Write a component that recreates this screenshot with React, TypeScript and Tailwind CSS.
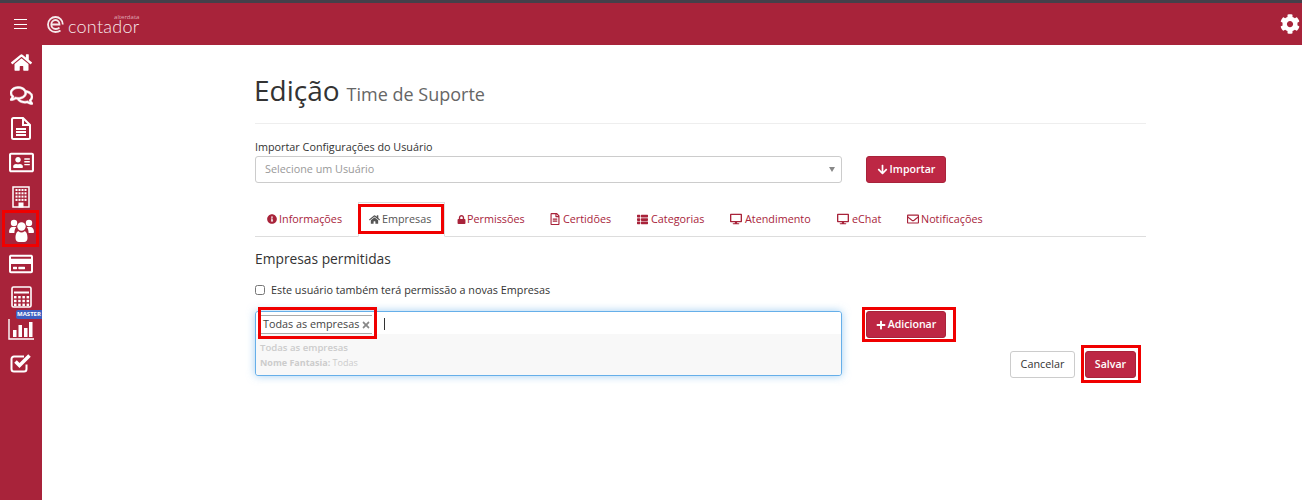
import { FaHome, FaRegComments, FaRegFileAlt, FaRegAddressCard, FaRegCreditCard, FaCog, FaInfoCircle, FaLock, FaThList, FaDesktop, FaRegEnvelope, FaArrowDown, FaPlus, FaTimes } from "react-icons/fa";

const tabs = [
	{ label: "Informações", icon: <FaInfoCircle size={10} />, gap: "gap-[2px]", width: "w-[103px] pl-[12px]" },
	{ label: "Empresas", icon: <FaHome size={11} />, gap: "gap-[2px]", width: "w-[87px] pl-[10px]", active: true },
	{ label: "Permissões", icon: <FaLock size={9} />, gap: "gap-[1px]", width: "w-[93px] pl-[12px]" },
	{ label: "Certidões", icon: <FaRegFileAlt size={12} />, gap: "gap-[2px]", width: "w-[87px] pl-[11px]" },
	{ label: "Categorias", icon: <FaThList size={11} />, gap: "gap-[3px]", width: "w-[93px] pl-[12px]" },
	{ label: "Atendimento", icon: <FaDesktop size={12} />, gap: "gap-[3px]", width: "w-[107px] pl-[12px]" },
	{ label: "eChat", icon: <FaDesktop size={12} />, gap: "gap-[3px]", width: "w-[70px] pl-[12px]" },
	{ label: "Notificações", icon: <FaRegEnvelope size={12} />, gap: "gap-[2px]", width: "w-[100px] pl-[12px]" },
];

function Marker(props: { className: string }) {
	return <div className={`absolute border-[3px] border-[#f00000] pointer-events-none ${props.className}`} />;
}

function FileIcon() {
	return (
		<svg width="20" height="23" viewBox="0 0 20 23" fill="none" stroke="white" strokeWidth="2">
			<path d="M1 2.500A1.500 1.500 0 0 1 2.500 1H12l7 7v12.500a1.500 1.500 0 0 1-1.500 1.500h-15A1.500 1.500 0 0 1 1 20.500z" />
			<path d="M12 1v7h7M5 12h10M5 15h10M5 18h10" />
		</svg>
	);
}

function BuildingIcon() {
	const cells = [];
	for (let y = 0; y < 4; y++) {
		for (let x = 0; x < 4; x++) {
			cells.push(<rect key={`${x}-${y}`} x={3.5 + x * 3} y={3 + y * 3.3} width="2" height="2" fill="white" />);
		}
	}
	return (
		<svg width="18" height="22" viewBox="0 0 18 22" fill="none">
			<rect x="1" y="1" width="16" height="20" stroke="white" strokeWidth="1.500" />
			{cells}
			<rect x="6.500" y="16.500" width="5" height="5" fill="white" />
		</svg>
	);
}

function UsersIcon() {
	return (
		<svg width="25" height="23" viewBox="0 0 25 23" fill="white">
			<circle cx="5" cy="4" r="3.200" />
			<circle cx="20" cy="4" r="3.200" />
			<path d="M0 13c0-3 1.500-5 3.500-5h3.800C6 9.500 5.500 11 5.400 14H1.500C.5 14 0 13.700 0 13zM25 13c0-3-1.500-5-3.500-5h-3.800c1.300 1.500 1.800 3 1.900 6h3.900c1 0 1.500-.3 1.500-1z" />
			<circle cx="12.500" cy="7.500" r="4.200" />
			<path d="M6.500 19c0-4.500 1.500-6.800 3-6.800.9.8 1.900 1.200 3 1.200s2.100-.4 3-1.200c1.500 0 3 2.300 3 6.800 0 2.500-1.500 4-3.500 4h-5c-2 0-3.500-1.500-3.500-4z" />
		</svg>
	);
}

function CalculatorIcon() {
	const keys = [];
	for (let y = 0; y < 3; y++) {
		for (let x = 0; x < 4; x++) {
			keys.push(<rect key={`${x}-${y}`} x={3 + x * 4.2} y={10 + y * 3.8} width="2.500" height="2.400" fill="white" />);
		}
	}
	return (
		<svg width="21" height="22" viewBox="0 0 21 22" fill="none">
			<rect x="1" y="1" width="19" height="20" rx="1.500" stroke="white" strokeWidth="1.600" />
			<path d="M3 6.500h15" stroke="white" strokeWidth="2" />
			{keys}
		</svg>
	);
}

function ChartIcon() {
	return (
		<svg width="26" height="21" viewBox="0 0 26 21" fill="white">
			<path d="M1 0v20h25" fill="none" stroke="white" strokeWidth="1.400" />
			<rect x="5" y="11" width="3.500" height="7" />
			<rect x="10.500" y="6" width="3.500" height="12" />
			<rect x="16" y="9" width="3.500" height="9" />
			<rect x="21" y="3" width="3.500" height="15" />
		</svg>
	);
}

function CheckIcon() {
	return (
		<svg width="22" height="20" viewBox="0 0 22 20" fill="none">
			<path d="M16.500 11.500v4.500a2.500 2.500 0 0 1-2.500 2.500H4A2.500 2.500 0 0 1 1.500 16V6A2.500 2.500 0 0 1 4 3.500h10" stroke="white" strokeWidth="2" />
			<path d="M5.500 8.500l4 4 10-10" stroke="white" strokeWidth="3.600" />
		</svg>
	);
}

function Sidebar() {
	return (
		<aside className="w-[42px] shrink-0 bg-[#a8233a] text-white flex flex-col items-center pt-[1px] h-[455px]">
			<div className="h-[33px] flex items-center justify-center"><FaHome size={21} /></div>
			<div className="h-[33px] flex items-center justify-center"><FaRegComments size={23} stroke="white" strokeWidth={14} /></div>
			<div className="h-[33px] flex items-center justify-center"><FileIcon /></div>
			<div className="h-[35px] flex items-center justify-center"><FaRegAddressCard size={25} /></div>
			<div className="h-[33px] flex items-center justify-center"><BuildingIcon /></div>
			<div className="relative h-[34px] w-full flex items-center justify-center">
				<UsersIcon />
				<Marker className="left-[2px] top-[-3px] w-[37px] h-[37px]" />
			</div>
			<div className="h-[33px] flex items-center justify-center"><FaRegCreditCard size={24} /></div>
			<div className="h-[33px] flex items-center justify-center"><CalculatorIcon /></div>
			<div className="relative h-[33px] w-full flex items-center justify-center">
				<ChartIcon />
				<span className="absolute left-[16px] top-[-3px] w-[26px] h-[9px] rounded-l-[2px] bg-[#3f5fc0] text-[6px] leading-[9px] font-bold text-center">MASTER</span>
			</div>
			<div className="h-[33px] flex items-center justify-center"><CheckIcon /></div>
		</aside>
	);
}

export default function App() {
	return (
		<div className="h-[500px] overflow-hidden bg-white text-[#333] font-['Open_Sans',sans-serif] text-[10.8px]">
			<div className="h-[3px] bg-[#45404a]" />
			<header className="h-[42px] bg-[#a8233a] flex items-center text-white">
				<div className="w-[41px] flex justify-center">
					<div className="w-[13px] flex flex-col gap-[3.500px]">
						<div className="h-px bg-white" />
						<div className="h-px bg-white" />
						<div className="h-px bg-white" />
					</div>
				</div>
				<div className="relative flex items-center ml-[6px] opacity-90">
					<svg width="17" height="17" viewBox="0 0 17 17" fill="none" stroke="white" strokeWidth="1.800">
						<path d="M4.500 8.500h8c0-2.500-1.700-4.500-4-4.500s-4.200 2-4.200 4.500 1.900 4.500 4.500 4.500c1.600 0 2.800-.5 3.700-1.300" />
						<path d="M15.800 8.500C15.800 4 12.500 1 8.500 1S1 4.300 1 8.500 4.300 16 8.500 16c2 0 3.500-.4 5-1.500" />
					</svg>
					<span className="ml-[4px] mt-[4px] text-[18px] font-['Lato',sans-serif] font-light tracking-[0.25px] leading-[14px]">contador</span>
					<span className="absolute right-0 top-0 text-[6px] leading-[4px] text-[#e6b9c2]">alterdata</span>
				</div>
				<div className="ml-auto mr-[2px]"><FaCog size={20} /></div>
			</header>
			<div className="flex">
				<Sidebar />
				<main className="flex-1 pl-[213px] pr-[156px]">
					<div className="flex items-baseline gap-[7px] h-[79px] pt-[23px] border-b border-[#eeeeee]">
						<h1 className="text-[28px] leading-[44px] text-[#333] ml-[-1px]">Edição</h1>
						<span className="text-[18px] text-[#666]">Time de Suporte</span>
					</div>
					<label className="block mt-[15px] leading-[15px]">Importar Configurações do Usuário</label>
					<div className="flex mt-[2px] gap-[24px]">
						<div className="w-[587px] h-[27px] border border-[#ccc] rounded-[3px] flex items-center justify-between pl-[9px] pr-[6px] text-[#999]">
							<span>Selecione um Usuário</span>
							<span className="w-0 h-0 border-x-[3px] border-x-transparent border-t-[5px] border-t-[#888]" />
						</div>
						<button className="w-[80px] h-[27px] rounded-[3px] bg-[#bd2744] border border-[#a8233a] text-white text-[10.6px] font-semibold flex items-center justify-center gap-[2px]">
							<FaArrowDown size={11} /> Importar
						</button>
					</div>
					<nav className="flex h-[35px] mt-[19px] border-b border-[#ddd]">
						{tabs.map((t) => (
							<div key={t.label} className={`relative flex items-center ${t.gap} ${t.width} ${t.active ? "h-[35px] text-[#555] border border-b-white border-[#ddd]" : "h-full text-[#a8233a]"}`}>
								{t.icon}
								<span>{t.label}</span>
								{t.active && <Marker className="left-[-1px] top-[1px] right-0 bottom-[2px]" />}
							</div>
						))}
					</nav>
					<h2 className="mt-[12px] text-[13.800px] leading-[20px] text-[#333]">Empresas permitidas</h2>
					<label className="flex items-center gap-[6px] mt-[11px] h-[20px]">
						<input type="checkbox" className="w-[10px] h-[10px] appearance-auto" />
						<span>Este usuário também terá permissão a novas Empresas</span>
					</label>
					<div className="flex mt-[11px] gap-[24px] items-start">
						<div className="w-[587px] h-[65px] border border-[#66afe9] rounded-[3px] shadow-[0_0_8px_rgba(102,175,233,0.6)] flex flex-col">
							<div className="h-[22px] flex items-start pl-[4px] pt-[3px] bg-white rounded-t-[3px]">
								<div className="relative h-[19px] w-[112px] border-y border-[#aaa] flex items-center justify-between pl-[3px] pr-[1px]">
									<span className="whitespace-nowrap text-[#444]">Todas as empresas</span>
									<FaTimes size={10} className="text-[#888]" />
									<Marker className="left-[-2px] top-[-9px] w-[119px] h-[32px]" />
								</div>
								<div className="w-px h-[12px] bg-[#333] ml-[12px] mt-[3px]" />
							</div>
							<div className="flex-1 bg-[#f8f8f8] pl-[4px] pt-[6px] text-[9px] leading-[15px] text-[#ccc] rounded-b-[3px]">
								<div className="font-semibold text-[9.600px]">Todas as empresas</div>
								<div><b>Nome Fantasia:</b> Todas</div>
							</div>
						</div>
						<div className="relative">
							<button className="w-[80px] h-[27px] rounded-[3px] bg-[#bd2744] border border-[#a8233a] text-white text-[10.6px] font-semibold flex items-center justify-center gap-[2px]">
								<FaPlus size={10} /> Adicionar
							</button>
							<Marker className="left-[-4px] top-[-4px] w-[94px] h-[35px]" />
						</div>
					</div>
					<div className="flex justify-end pr-[10px] gap-[10px] mt-[-25px]">
						<button className="w-[65px] h-[27px] rounded-[3px] bg-white border border-[#ccc] text-[#333]">Cancelar</button>
						<div className="relative">
							<button className="w-[51px] h-[27px] rounded-[3px] bg-[#bd2744] border border-[#a8233a] text-white text-[10.6px] font-semibold">Salvar</button>
							<Marker className="left-[-4px] top-[-6px] w-[60px] h-[38px]" />
						</div>
					</div>
				</main>
			</div>
		</div>
	);
}
